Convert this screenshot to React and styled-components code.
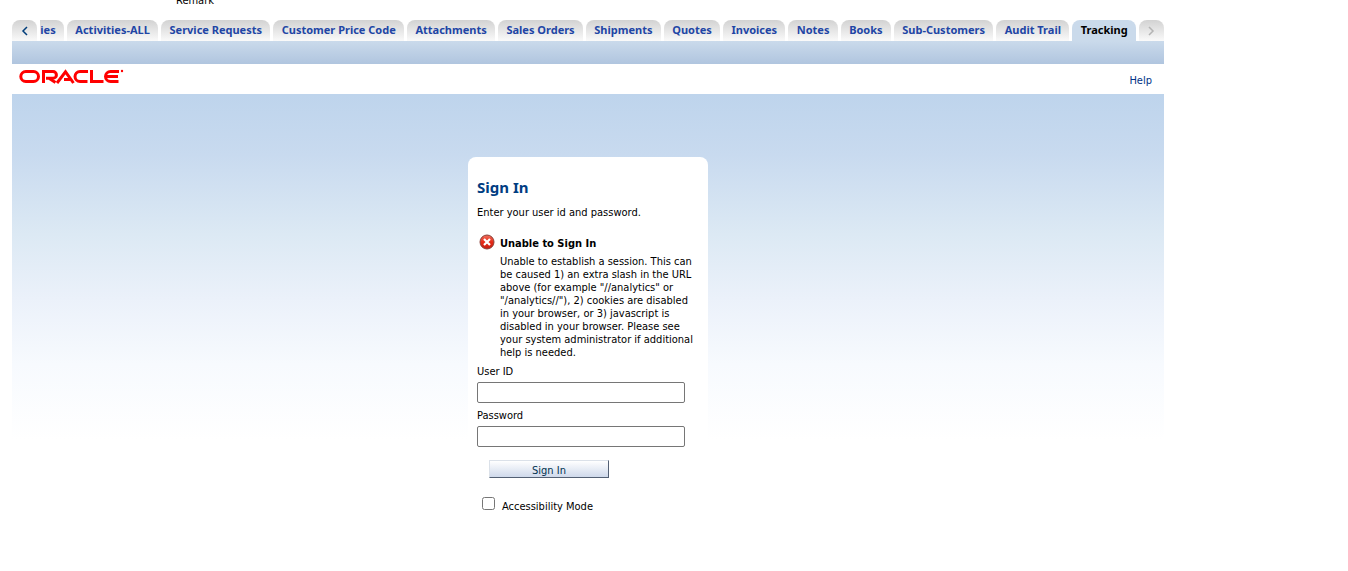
import React from "react";
import styled, { createGlobalStyle } from "styled-components";

const GlobalStyle = createGlobalStyle`
  * {
    box-sizing: border-box;
  }

  body {
    margin: 0;
    background: #fff;
    color: #000;
    font-family: "DejaVu Sans Condensed", Tahoma, sans-serif;
    font-size: 11px;
    line-height: 13px;
  }
`;

const Page = styled.div`
  padding: 0 184px 0 12px;
`;

const FieldRow = styled.div`
  height: 20px;
  padding-left: 164px;
  overflow: hidden;
  line-height: 1px;
`;

const TabBar = styled.nav`
  display: flex;
  gap: 3px;
  height: 21px;
`;

const tabShape = `
  height: 21px;
  border: 0;
  border-radius: 8px 8px 0 0;
  background: linear-gradient(#d2d2d2, #fafafa);
`;

const ScrollButton = styled.button`
  ${tabShape}
  flex: 0 0 25px;
  display: flex;
  align-items: center;
  justify-content: center;
  padding: 0;
  color: ${({ disabled }) => (disabled ? "#b4b4b4" : "#003d7a")};
`;

const Tab = styled.a`
  ${tabShape}
  flex: 1 1 auto;
  min-width: 0;
  padding: 0 8px;
  color: #2145a5;
  font-family: "Noto Sans", Tahoma, sans-serif;
  font-weight: bold;
  line-height: 20px;
  text-align: center;
  text-decoration: none;
  white-space: nowrap;

  &[aria-current="page"] {
    background: #cadaeb;
    color: #000;
  }
`;

const CutTab = styled(Tab)`
  flex: 0 0 24px;
  padding: 0 8px 0 0;
  border-radius: 0 8px 0 0;
`;

const Band = styled.div`
  height: 23px;
  background: linear-gradient(#cadaeb, #b0c5df);
`;

const Header = styled.header`
  display: flex;
  justify-content: space-between;
  height: 30px;
  padding: 5px 12px 0 7px;
`;

const HelpLink = styled.a`
  padding-top: 5px;
  color: #003286;
  text-decoration: none;
`;

const Main = styled.main`
  display: flex;
  justify-content: center;
  padding-top: 63px;
  background: linear-gradient(
    #bed4ec 0px,
    #c8daef 60px,
    #dce9f4 140px,
    #ebf1fa 205px,
    #f7fafe 270px,
    #ffffff 346px
  );
`;

const Card = styled.form`
  display: flex;
  flex-direction: column;
  align-items: flex-start;
  width: 240px;
  padding: 21px 9px 48px;
  border-radius: 8px 8px 0 0;
  background: #fff;
`;

const Title = styled.h1`
  margin: 0 0 10px;
  color: #003d82;
  font-family: "Noto Sans", Tahoma, sans-serif;
  font-size: 15px;
  line-height: 18px;
`;

const Intro = styled.p`
  margin: 0 0 15px;
`;

const ErrorBox = styled.div`
  display: flex;
  gap: 5px;
  padding-left: 2px;
  margin-bottom: 6px;
`;

const ErrorIcon = styled.svg`
  flex: none;
`;

const ErrorTitle = styled.h2`
  margin: 3px 0 4px;
  font-size: 11px;
  line-height: 14px;
`;

const ErrorText = styled.p`
  margin: 0;
`;

const Label = styled.label`
  margin-bottom: 4px;
`;

const Input = styled.input`
  width: 208px;
  height: 21px;
  margin-bottom: 6px;
  padding: 1px 2px;
  border: 1px solid #767676;
  border-radius: 2px;
  background: #fff;
  font: inherit;
`;

const SubmitButton = styled.button`
  width: 120px;
  height: 18px;
  margin: 7px 0 18px 12px;
  padding: 2px 0 0;
  border: 1px solid;
  border-color: #dbe1e9 #536074 #536074 #dbe1e9;
  background: linear-gradient(#fff, #cfd9eb);
  color: #003150;
  font: inherit;
`;

const CheckRow = styled.label`
  display: flex;
  gap: 7px;
  padding: 1px 0 0 5px;
`;

const Checkbox = styled.input`
  width: 13px;
  height: 13px;
  margin: 0;
`;

const CheckText = styled.span`
  padding-top: 3px;
`;

const TABS = [
  "Activities-ALL",
  "Service Requests",
  "Customer Price Code",
  "Attachments",
  "Sales Orders",
  "Shipments",
  "Quotes",
  "Invoices",
  "Notes",
  "Books",
  "Sub-Customers",
  "Audit Trail",
  "Tracking",
];

const Chevron = ({ d }) => (
  <svg width="8" height="10" viewBox="0 0 8 10" fill="none" stroke="currentColor" strokeWidth="1.5" aria-hidden="true">
    <path d={d} />
  </svg>
);

const OracleLogo = () => (
  <svg width="105" height="15" viewBox="0 0 105 15" fill="none" stroke="#f00" strokeWidth="3" role="img" aria-label="Oracle">
    <path d="M6.8 2.5H14.5a5 5 0 0 1 0 10H6.8a5 5 0 0 1 0-10z" />
    <path d="M24.5 14V2.500H34a3.300 3.300 0 0 1 0 6.800H27M30 9.300l6.500 4.300" />
    <path d="M38 14L46.500 2.800 54.500 14M45 10.500h6" />
    <path d="M69 2.500H61a5 5 0 0 0 0 10h7.500" />
    <path d="M72.500 1v11.500H84.500" />
    <path d="M100 2.500H91.500a5 5 0 0 0 0 10H99.500M87 7.500h12" />
    <circle cx="103" cy="2" r="1.200" fill="#f00" stroke="none" />
  </svg>
);

const App = () => {
  return (
    <>
      <GlobalStyle />
      <Page>
        <FieldRow>Remark</FieldRow>
        <TabBar>
          <ScrollButton type="button" aria-label="Previous tabs">
            <Chevron d="M6 1L2 5l4 4" />
          </ScrollButton>
          <CutTab href="#activities">ies</CutTab>
          {TABS.map((tab) => (
            <Tab key={tab} href="#tab" aria-current={tab === "Tracking" ? "page" : undefined}>
              {tab}
            </Tab>
          ))}
          <ScrollButton type="button" aria-label="Next tabs" disabled>
            <Chevron d="M2 1l4 4-4 4" />
          </ScrollButton>
        </TabBar>
        <Band />
        <Header>
          <OracleLogo />
          <HelpLink href="#help">Help</HelpLink>
        </Header>
        <Main>
          <Card>
            <Title>Sign In</Title>
            <Intro>Enter your user id and password.</Intro>
            <ErrorBox role="alert">
              <ErrorIcon width="16" height="16" viewBox="0 0 16 16" aria-hidden="true">
                <defs>
                  <linearGradient id="errorFill" x1="0" y1="0" x2="0" y2="1">
                    <stop offset="0" stopColor="#f0705f" />
                    <stop offset="0.5" stopColor="#e62b18" />
                    <stop offset="1" stopColor="#c41c10" />
                  </linearGradient>
                </defs>
                <circle cx="8" cy="8" r="7" fill="url(#errorFill)" stroke="#8a4038" />
                <path d="M5 5l6 6M11 5l-6 6" stroke="#fff" strokeWidth="2.2" />
              </ErrorIcon>
              <div>
                <ErrorTitle>Unable to Sign In</ErrorTitle>
                <ErrorText>
                  Unable to establish a session. This can be caused 1) an extra slash in the URL above (for example
                  "//analytics" or "/analytics//"), 2) cookies are disabled in your browser, or 3) javascript is
                  disabled in your browser. Please see your system administrator if additional help is needed.
                </ErrorText>
              </div>
            </ErrorBox>
            <Label htmlFor="userId">User ID</Label>
            <Input id="userId" type="text" />
            <Label htmlFor="password">Password</Label>
            <Input id="password" type="password" />
            <SubmitButton type="submit">Sign In</SubmitButton>
            <CheckRow>
              <Checkbox type="checkbox" />
              <CheckText>Accessibility Mode</CheckText>
            </CheckRow>
          </Card>
        </Main>
      </Page>
    </>
  );
};

export default App;
